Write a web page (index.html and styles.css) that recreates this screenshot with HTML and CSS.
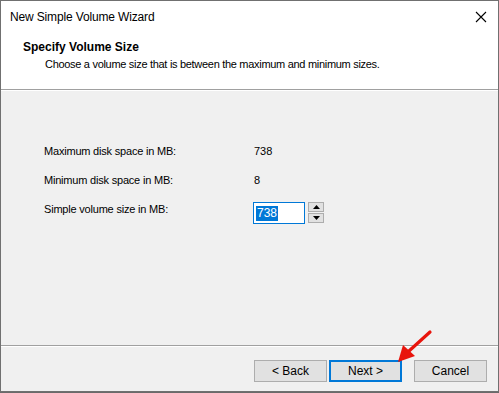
FILE: index.html
```html
<!DOCTYPE html>
<html>
<head>
<meta charset="utf-8">
<link rel="stylesheet" href="styles.css">
</head>
<body>
<div class="window">
  <div class="titlebar">
    <span class="title">New Simple Volume Wizard</span>
    <svg class="close" width="12" height="12" viewBox="0 0 12 12"><path d="M1 1 L11 11 M11 1 L1 11" stroke="#000" stroke-width="1.1" fill="none"/></svg>
  </div>
  <div class="header">
    <div class="h-title">Specify Volume Size</div>
    <div class="h-sub">Choose a volume size that is between the maximum and minimum sizes.</div>
  </div>
  <div class="content">
    <div class="grid">
      <div class="label">Maximum disk space in MB:</div>
      <div class="value">738</div>
      <div class="label">Minimum disk space in MB:</div>
      <div class="value">8</div>
      <div class="label">Simple volume size in MB:</div>
      <div class="spin-wrap">
        <div class="input"><span class="sel">738</span></div>
        <div class="spinner">
          <div class="sbtn"><svg width="7" height="4" viewBox="0 0 7 4"><path d="M0 4 L3.5 0 L7 4 Z" fill="#000"/></svg></div>
          <div class="sbtn"><svg width="7" height="4" viewBox="0 0 7 4"><path d="M0 0 L3.5 4 L7 0 Z" fill="#000"/></svg></div>
        </div>
      </div>
    </div>
  </div>
  <div class="footer">
    <div class="btn">&lt; Back</div>
    <div class="btn primary">Next &gt;</div>
    <div class="btn cancel">Cancel</div>
  </div>
  <svg class="arrow" width="40" height="36" viewBox="0 0 40 36">
    <line x1="33" y1="4" x2="12" y2="23" stroke="#e8140c" stroke-width="3.2" stroke-linecap="round"/>
    <path d="M1 34 L6 17 L18 28 Z" fill="#e8140c"/>
  </svg>
</div>
</body>
</html>
```
FILE: styles.css
```css
html, body {
  margin: 0;
  padding: 0;
}
body {
  width: 499px;
  height: 393px;
  background: #6a6a6a;
  font-family: "Liberation Sans", Arial, sans-serif;
  font-size: 11px;
  color: #000;
  overflow: hidden;
}
.window {
  position: relative;
  box-sizing: border-box;
  width: 499px;
  height: 392px;
  border: 1px solid #707070;
  background: #f0f0f0;
  display: flex;
  flex-direction: column;
}
.titlebar {
  height: 31px;
  background: #fff;
  display: flex;
  align-items: center;
  justify-content: space-between;
  padding: 0 8px 0 9px;
}
.title {
  font-size: 12px;
  letter-spacing: -0.15px;
  color: #000;
  margin-top: 1px;
}
.close {
  margin-right: 3px;
}
.header {
  background: #fff;
  border-bottom: 1px solid #a0a0a0;
  padding-top: 8px;
  box-sizing: border-box;
  height: 58px;
}
.h-title {
  font-weight: bold;
  font-size: 12px;
  line-height: 15px;
  padding-left: 22px;
}
.h-sub {
  line-height: 14px;
  padding-left: 44px;
  margin-top: 2px;
  letter-spacing: -0.3px;
}
.content {
  flex: 1;
  border-top: 1px solid #fff;
  border-bottom: 1px solid #a0a0a0;
  padding-top: 46px;
  box-sizing: border-box;
}
.grid {
  display: grid;
  grid-template-columns: 210px auto;
  grid-template-rows: 29px 29px 29px;
  padding-left: 43px;
}
.label, .value {
  line-height: 29px;
}
.label {
  letter-spacing: -0.2px;
}
.spin-wrap {
  display: flex;
  align-items: flex-start;
  margin-top: 7px;
  margin-left: -1px;
}
.input {
  box-sizing: border-box;
  width: 52px;
  height: 22px;
  border: 1px solid #0078d7;
  background: #fff;
  padding: 3px 0 0 2px;
}
.sel {
  display: inline-block;
  background: #0078d7;
  color: #fff;
  line-height: 15px;
  padding: 0 1px;
  font-size: 12px;
}
.spinner {
  margin-left: 3px;
  display: flex;
  flex-direction: column;
  gap: 1px;
}
.sbtn {
  box-sizing: border-box;
  width: 16px;
  height: 10px;
  background: #e1e1e1;
  border: 1px solid #adadad;
  display: flex;
  align-items: center;
  justify-content: center;
}
.footer {
  height: 45px;
  border-top: 1px solid #fff;
  box-sizing: border-box;
  display: flex;
  align-items: flex-start;
  padding-top: 13px;
  padding-left: 253px;
}
.btn {
  box-sizing: border-box;
  width: 73px;
  height: 22px;
  background: #e1e1e1;
  border: 1px solid #adadad;
  display: flex;
  align-items: center;
  justify-content: center;
  font-size: 12px;
}
.primary {
  margin-left: 2px;
  border: 2px solid #0078d7;
}
.cancel {
  margin-left: 12px;
}
.arrow {
  position: absolute;
  left: 396px;
  top: 327px;
}
```
